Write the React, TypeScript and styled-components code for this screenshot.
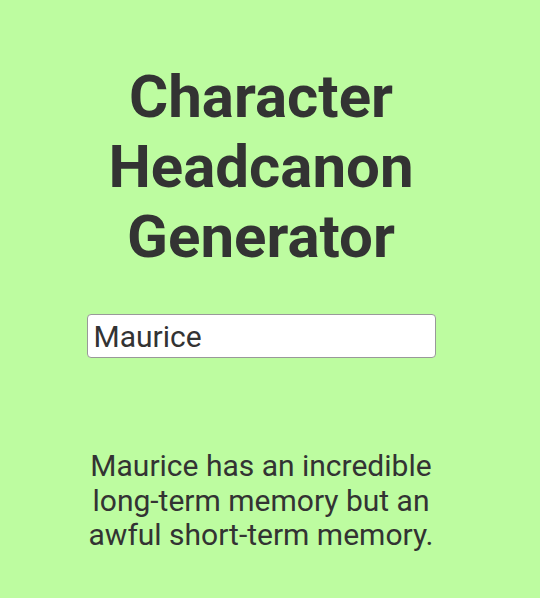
import React, { useState } from 'react';
import { styled, createGlobalStyle } from 'styled-components';

const GlobalStyle = createGlobalStyle`
  html, body {
    margin: 0;
    padding: 0;
    background: #bdfca0;
  }
  * {
    box-sizing: border-box;
  }
`;

const Page = styled.main`
  min-height: 598px;
  display: flex;
  flex-direction: column;
  align-items: center;
  padding: 62px 18px 0 0;
  font-family: Roboto, "Liberation Sans", sans-serif;
  color: #333;
`;

const Title = styled.h1`
  margin: 0;
  width: 360px;
  text-align: center;
  font-size: 60px;
  line-height: 70px;
  font-weight: 700;
`;

const NameInput = styled.input`
  margin-top: 42px;
  width: 349px;
  height: 44px;
  padding: 0 6px;
  border: 1px solid #999;
  border-radius: 4px;
  background: #fff;
  font-family: Roboto, "Liberation Sans", sans-serif;
  font-size: 30px;
  color: #333;
  outline: none;
`;

const Result = styled.p`
  margin: 91px 0 0;
  width: 370px;
  text-align: center;
  font-size: 30px;
  line-height: 34.5px;
  color: #333;
`;

export default function App() {
  const [name, setName] = useState("Maurice");

  return (
    <>
      <GlobalStyle />
      <Page>
        <Title>Character Headcanon Generator</Title>
        <NameInput value={name} onChange={(e) => setName(e.target.value)} />
        <Result>
          {name} has an incredible long-term memory but an awful short-term memory.
        </Result>
      </Page>
    </>
  );
}
